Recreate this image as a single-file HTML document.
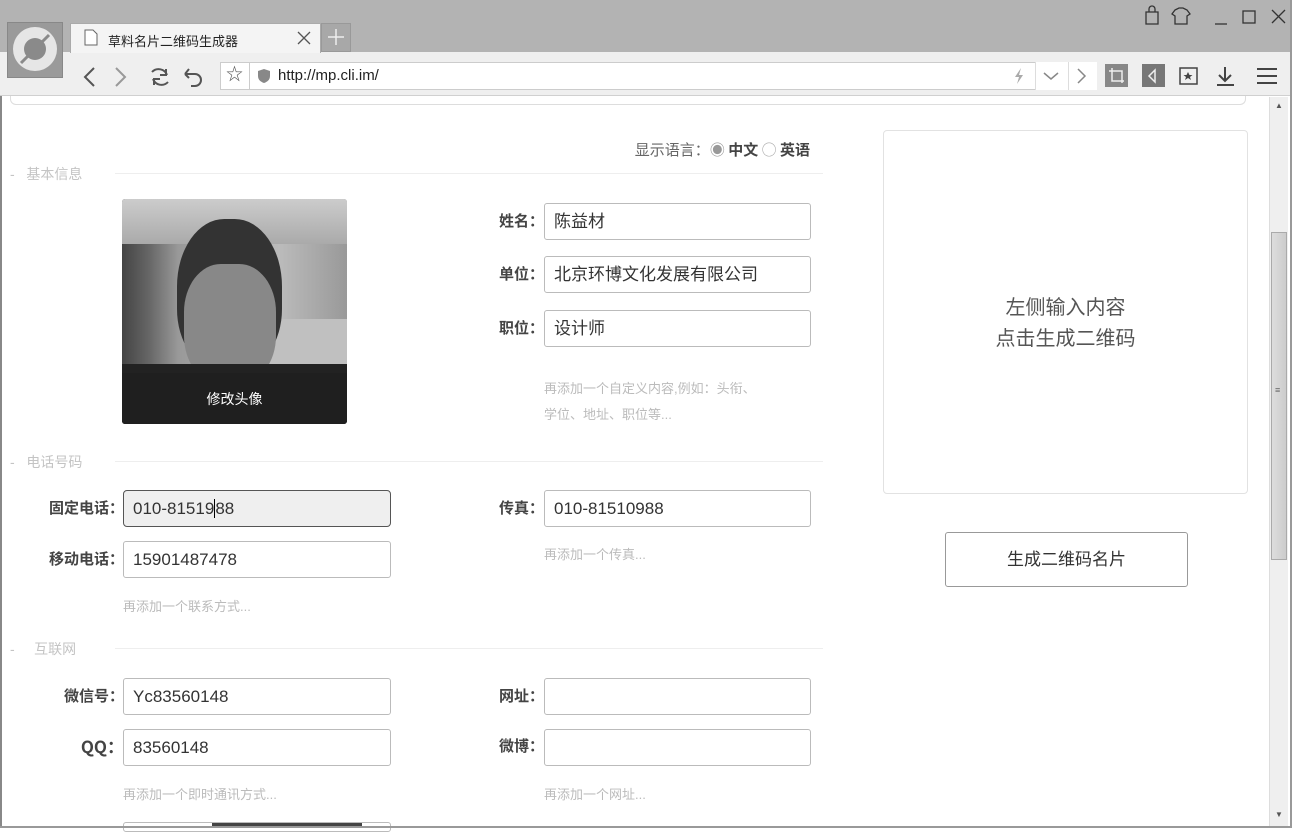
<!DOCTYPE html>
<html><head><meta charset="utf-8">
<style>
*{margin:0;padding:0;box-sizing:border-box}
body{width:1305px;height:828px;overflow:hidden;background:#fff;font-family:"Liberation Sans","Noto Sans CJK SC",sans-serif;position:relative;color:#333}
.a{position:absolute}
.title{left:0;top:0;width:1293px;height:52px;background:#b3b3b3}
.tool{left:0;top:52px;width:1293px;height:44px;background:#efefef;border-bottom:1px solid #d0d0d0}
.lbl{position:absolute;font-size:15px;font-weight:bold;color:#444;text-align:right;width:124px;font-family:"Noto Sans CJK SC","Liberation Sans",sans-serif;line-height:20px}
.inp{position:absolute;height:37px;border:1px solid #bbb;border-radius:3px;background:#fff;font-size:17px;color:#333;padding:8px 9px;line-height:20px}
.hint{position:absolute;font-size:13px;color:#bbb;line-height:26px}
.sec{position:absolute;font-size:14px;color:#c4c4c4}
.line{position:absolute;height:1px;background:#eee}
</style></head><body>
<div class="a title"></div>
<div class="a tool"></div>
<!-- logo -->
<div class="a" style="left:7px;top:22px;width:56px;height:56px;background:#9a9a9a;border:1px solid #888"></div>
<div class="a" style="left:13px;top:27px;width:44px;height:44px;border-radius:50%;background:#e6e6e6"></div>
<div class="a" style="left:24px;top:38px;width:22px;height:22px;border-radius:50%;background:#8a8a8a"></div>
<svg class="a" style="left:13px;top:27px" width="44" height="44"><line x1="8" y1="36" x2="36" y2="8" stroke="#8a8a8a" stroke-width="3"/></svg>
<!-- tab -->
<div class="a" style="left:70px;top:23px;width:251px;height:30px;background:#f4f4f4;border:1px solid #aaa;border-bottom:none"></div>
<svg class="a" style="left:84px;top:29px" width="14" height="17"><path d="M1 1h8l4 4v11H1z" fill="#fff" stroke="#666"/></svg>
<div class="a" style="left:108px;top:31px;font-size:13px;color:#222">草料名片二维码生成器</div>
<svg class="a" style="left:297px;top:31px" width="14" height="14" stroke="#555" stroke-width="1.3"><path d="M1 1l12 12M13 1L1 13"/></svg>
<div class="a" style="left:321px;top:23px;width:30px;height:29px;background:#a8a8a8;border:1px solid #999"></div>
<svg class="a" style="left:327px;top:28px" width="18" height="18" stroke="#eee" stroke-width="1.5"><path d="M9 1v16M1 9h16"/></svg>
<!-- window controls -->
<svg class="a" style="left:1140px;top:4px" width="150" height="24" fill="none" stroke="#333" stroke-width="1.3">
<path d="M6 8h12v12H6zM9 8V5a3 3 0 0 1 6 0v3"/>
<path d="M35 6l4-2h4l4 2 3 4-3 2v8h-12v-8l-3-2z"/>
<path d="M75 20h12"/>
<rect x="103" y="7" width="12" height="12"/>
<path d="M132 6l13 13M145 6l-13 13"/>
</svg>
<!-- nav -->
<svg class="a" style="left:78px;top:64px" width="240" height="26" fill="none" stroke="#555" stroke-width="2">
<path d="M16 4l-9 9 9 9"/><path d="M38 4l9 9-9 9" stroke="#999"/>
<path d="M74 8a9 9 0 0 1 15 3M90 18a9 9 0 0 1-15-3M88 5v6h-6M76 21v-6h6"/>
<path d="M107 10h10a6 6 0 0 1 0 12h-4M107 10l4-5M107 10l4 4"/>
</svg>
<div class="a" style="left:220px;top:62px;width:1075px;height:28px;background:#fff;border:1px solid #ccc"></div>
<div class="a" style="left:220px;top:62px;width:30px;height:28px;border-right:1px solid #ccc;font-size:17px;color:#555;text-align:center;line-height:26px">☆</div>
<svg class="a" style="left:257px;top:68px" width="14" height="16"><path d="M7 1l6 2v5c0 4-3 6-6 7-3-1-6-3-6-7V3z" fill="#888"/></svg>
<div class="a" style="left:278px;top:67px;font-size:15px;color:#222">http://mp.cli.im/</div>
<div class="a" style="left:1035px;top:62px;width:70px;height:28px;border-left:1px solid #ddd;background:#fff"></div>
<svg class="a" style="left:1012px;top:67px" width="14" height="18"><path d="M9 1L3 10h4l-2 7 6-9H7z" fill="#aaa"/></svg>
<div class="a" style="left:1068px;top:62px;width:1px;height:28px;background:#ddd"></div>
<svg class="a" style="left:1042px;top:68px" width="60" height="16" fill="none" stroke="#888" stroke-width="1.5"><path d="M2 5l7 6 7-6"/><path d="M36 1l7 7-7 7"/></svg>
<div class="a" style="left:1097px;top:62px;width:200px;height:33px;background:#efefef"></div>
<div class="a" style="left:1105px;top:64px;width:23px;height:23px;background:#888"></div>
<div class="a" style="left:1142px;top:64px;width:23px;height:23px;background:#777"></div>
<svg class="a" style="left:1105px;top:64px" width="190" height="24" fill="none" stroke="#eee" stroke-width="1.5"><path d="M7 4v13h12M4 7h13v12"/><path d="M50 6l-6 6 6 6z"/>
<rect x="75" y="4" width="17" height="16" stroke="#444"/><path d="M83 8l1.5 3h3l-2.5 2 1 3-3-2-3 2 1-3-2.5-2h3z" fill="#444" stroke="none"/>
<path d="M120 3v14M114 11l6 6 6-6M112 21h17" stroke="#444" stroke-width="2"/>
<path d="M152 5h20M152 12h20M152 19h20" stroke="#444" stroke-width="2"/></svg>
<!-- content -->
<div class="a" style="left:10px;top:96px;width:1236px;height:9px;border:1px solid #ddd;border-top:none;border-radius:0 0 6px 6px"></div>
<div class="a" style="left:0;top:96px;width:2px;height:732px;background:#888"></div>
<div class="a" style="left:560px;top:139px;width:250px;text-align:right;font-size:15px;color:#666;font-family:'Noto Sans CJK SC',sans-serif">显示语言：<span style="color:#999">◉</span> <b style="color:#444">中文</b> <span style="color:#aaa">○</span> <b style="color:#444">英语</b></div>

<div class="sec" style="left:10px;top:164px">-&nbsp;&nbsp;&nbsp;基本信息</div><div class="line" style="left:115px;top:173px;width:708px"></div>
<div class="sec" style="left:10px;top:452px">-&nbsp;&nbsp;&nbsp;电话号码</div><div class="line" style="left:115px;top:461px;width:708px"></div>
<div class="sec" style="left:10px;top:639px">-&nbsp;&nbsp;&nbsp;&nbsp;&nbsp;互联网</div><div class="line" style="left:115px;top:648px;width:708px"></div>

<!-- photo -->
<div class="a" style="left:122px;top:199px;width:225px;height:225px;border-radius:3px;overflow:hidden;background:linear-gradient(90deg,#444 0,#666 12%,#999 25%,#aaa 45%,#bbb 70%,#999 100%)">
<div class="a" style="left:0;top:0;width:225px;height:45px;background:linear-gradient(#ccc,#aaa)"></div>
<div class="a" style="left:130px;top:120px;width:95px;height:55px;background:#c0c0c0"></div>
<div class="a" style="left:55px;top:20px;width:105px;height:150px;border-radius:45% 45% 40% 40%;background:#333"></div>
<div class="a" style="left:62px;top:65px;width:92px;height:120px;border-radius:40%;background:#888"></div>
<div class="a" style="left:0;top:165px;width:225px;height:60px;background:#222"></div>
<div class="a" style="left:0;top:174px;width:225px;height:51px;background:rgba(30,30,30,.85);color:#fff;font-size:14px;text-align:center;line-height:52px">修改头像</div>
</div>

<div class="lbl" style="left:420px;top:211px">姓名：</div><div class="inp" style="left:544px;top:203px;width:267px">陈益材</div>
<div class="lbl" style="left:420px;top:264px">单位：</div><div class="inp" style="left:544px;top:256px;width:267px">北京环博文化发展有限公司</div>
<div class="lbl" style="left:420px;top:318px">职位：</div><div class="inp" style="left:544px;top:310px;width:267px">设计师</div>
<div class="hint" style="left:544px;top:376px">再添加一个自定义内容,例如：头衔、<br>学位、地址、职位等...</div>

<div class="lbl" style="left:0;top:498px">固定电话：</div><div class="inp" style="left:123px;top:490px;width:268px;background:#efefef;border:1px solid #555;border-radius:4px">010-81519<span style="border-left:1px solid #000"></span>88</div>
<div class="lbl" style="left:0;top:549px">移动电话：</div><div class="inp" style="left:123px;top:541px;width:268px">15901487478</div>
<div class="hint" style="left:123px;top:594px">再添加一个联系方式...</div>
<div class="lbl" style="left:420px;top:498px">传真：</div><div class="inp" style="left:544px;top:490px;width:267px">010-81510988</div>
<div class="hint" style="left:544px;top:542px">再添加一个传真...</div>

<div class="lbl" style="left:0;top:686px">微信号：</div><div class="inp" style="left:123px;top:678px;width:268px">Yc83560148</div>
<div class="lbl" style="left:0;top:736px;font-size:17px">QQ：</div><div class="inp" style="left:123px;top:729px;width:268px">83560148</div>
<div class="hint" style="left:123px;top:782px">再添加一个即时通讯方式...</div>
<div class="lbl" style="left:420px;top:686px">网址：</div><div class="inp" style="left:544px;top:678px;width:267px"></div>
<div class="lbl" style="left:420px;top:736px">微博：</div><div class="inp" style="left:544px;top:729px;width:267px"></div>
<div class="hint" style="left:544px;top:782px">再添加一个网址...</div>
<div class="a" style="left:123px;top:822px;width:268px;height:10px;border:1px solid #bbb;border-radius:3px"></div>
<div class="a" style="left:212px;top:823px;width:150px;height:5px;background:#444"></div>

<!-- right panel -->
<div class="a" style="left:883px;top:130px;width:365px;height:364px;border:1px solid #e2e2e2;border-radius:4px;text-align:center;font-size:20px;color:#555;padding-top:162px;line-height:31px">左侧输入内容<br>点击生成二维码</div>
<div class="a" style="left:945px;top:532px;width:243px;height:55px;border:1px solid #999;border-radius:3px;text-align:center;line-height:53px;font-size:17px;color:#333">生成二维码名片</div>

<!-- scrollbar -->
<div class="a" style="left:1269px;top:97px;width:19px;height:731px;background:#efefef;border-left:1px solid #ddd"></div>
<div class="a" style="left:1271px;top:232px;width:16px;height:328px;background:linear-gradient(90deg,#ddd,#ccc);border:1px solid #aaa"></div>
<div class="a" style="left:1275px;top:385px;font-size:9px;color:#666">≡</div>
<div class="a" style="left:1275px;top:101px;font-size:8px;color:#555">▲</div>
<div class="a" style="left:1275px;top:810px;font-size:8px;color:#555">▼</div>
<div class="a" style="left:1290px;top:0;width:2px;height:828px;background:#999"></div>
<div class="a" style="left:1292px;top:0;width:13px;height:828px;background:#fff"></div>
<div class="a" style="left:0;top:826px;width:1290px;height:2px;background:#999"></div>
</body></html>
